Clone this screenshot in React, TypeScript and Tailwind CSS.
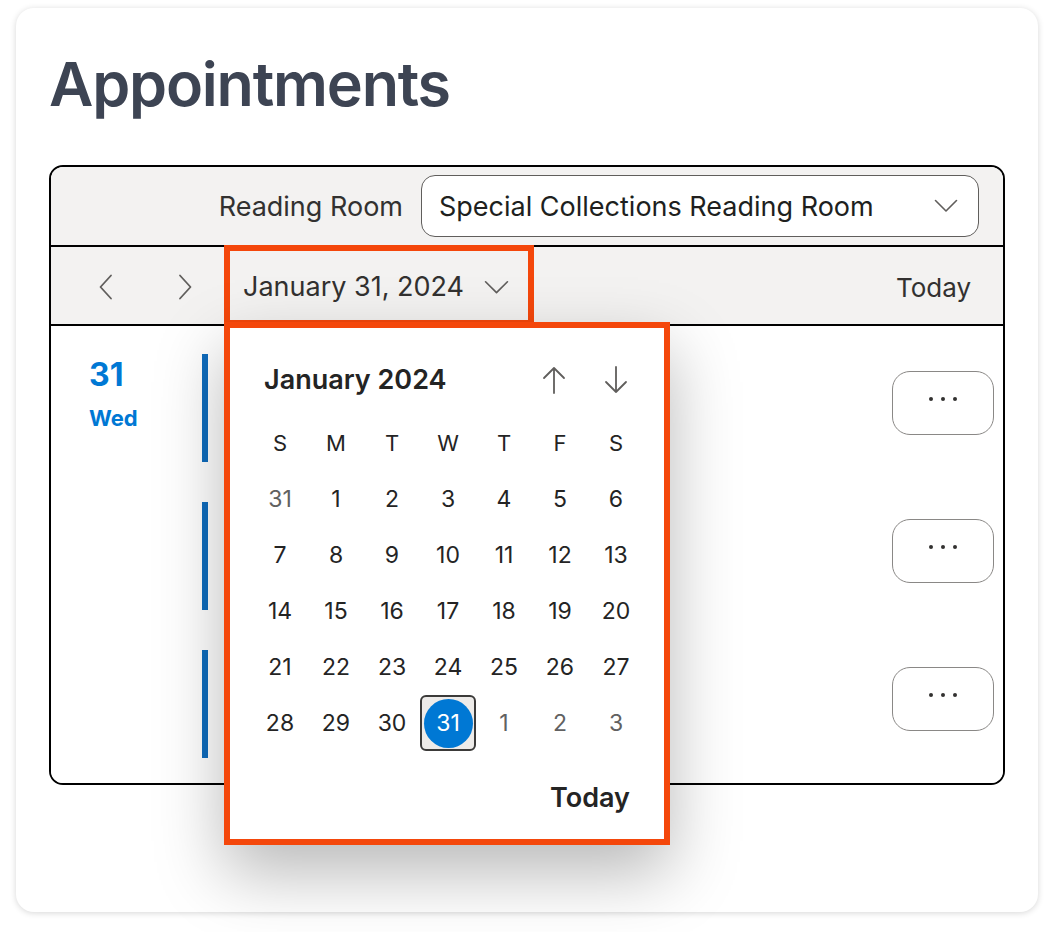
import React from "react";

const FONT = { fontFamily: "Inter, 'Noto Sans', 'Liberation Sans', sans-serif" };

function ChevronLeft() {
  return (
    <svg width="18" height="26" viewBox="0 0 18 26" fill="none">
      <path d="M14 1.5 L3.5 13 L14 24.5" stroke="#605e5c" strokeWidth="1.8" strokeLinecap="round" strokeLinejoin="round" />
    </svg>
  );
}
function ChevronRight() {
  return (
    <svg width="18" height="26" viewBox="0 0 18 26" fill="none">
      <path d="M4 1.5 L14.5 13 L4 24.5" stroke="#605e5c" strokeWidth="1.8" strokeLinecap="round" strokeLinejoin="round" />
    </svg>
  );
}
function ChevronDown({ w = 24, h = 14 }: { w?: number; h?: number }) {
  return (
    <svg width={w} height={h} viewBox="0 0 24 14" fill="none">
      <path d="M1.5 1.5 L12 12 L22.5 1.5" stroke="#605e5c" strokeWidth="1.6" strokeLinecap="round" strokeLinejoin="round" />
    </svg>
  );
}
function ArrowUp() {
  return (
    <svg width="24" height="28" viewBox="0 0 24 28" fill="none">
      <path d="M12 27 V2 M2 12 L12 2 L22 12" stroke="#605e5c" strokeWidth="1.8" strokeLinecap="round" strokeLinejoin="round" />
    </svg>
  );
}
function ArrowDown() {
  return (
    <svg width="24" height="28" viewBox="0 0 24 28" fill="none">
      <path d="M12 1 V26 M2 16 L12 26 L22 16" stroke="#605e5c" strokeWidth="1.8" strokeLinecap="round" strokeLinejoin="round" />
    </svg>
  );
}

function MoreButton() {
  return (
    <button className="w-[102px] h-[64px] rounded-[18px] border-[1.5px] border-[#8a8886] bg-white flex items-center justify-center gap-[8px] pb-[8px]">
      <span className="w-[4px] h-[4px] rounded-full bg-[#323130]" />
      <span className="w-[4px] h-[4px] rounded-full bg-[#323130]" />
      <span className="w-[4px] h-[4px] rounded-full bg-[#323130]" />
    </button>
  );
}

const weeks: { d: number; out?: boolean; sel?: boolean }[][] = [
  [{ d: 31, out: true }, { d: 1 }, { d: 2 }, { d: 3 }, { d: 4 }, { d: 5 }, { d: 6 }],
  [{ d: 7 }, { d: 8 }, { d: 9 }, { d: 10 }, { d: 11 }, { d: 12 }, { d: 13 }],
  [{ d: 14 }, { d: 15 }, { d: 16 }, { d: 17 }, { d: 18 }, { d: 19 }, { d: 20 }],
  [{ d: 21 }, { d: 22 }, { d: 23 }, { d: 24 }, { d: 25 }, { d: 26 }, { d: 27 }],
  [{ d: 28 }, { d: 29 }, { d: 30 }, { d: 31, sel: true }, { d: 1, out: true }, { d: 2, out: true }, { d: 3, out: true }],
];

function Popup() {
  return (
    <div className="absolute left-[173px] top-[155px] w-[446px] h-[523px] z-10 bg-white border-[6px] border-[#f4470b] shadow-[0_28px_64px_rgba(0,0,0,0.28)] pt-[24px] pl-[22px] pr-[20px]">
      <div className="h-[56px] flex items-center">
        <div className="pl-[12px] text-[27px] font-semibold text-[#242424] flex-1">January 2024</div>
        <div className="w-[56px] flex justify-center mr-[5px] ml-[2px]"><ArrowUp /></div>
        <div className="w-[56px] flex justify-center ml-[1px]"><ArrowDown /></div>
      </div>
      <div className="mt-[7px] grid grid-cols-7">
        {["S", "M", "T", "W", "T", "F", "S"].map((w, i) => (
          <div key={i} className="h-[56px] flex items-center justify-center text-[22px] text-[#242424]">{w}</div>
        ))}
        {weeks.flat().map((c, i) =>
          c.sel ? (
            <div key={i} className="h-[56px] rounded-[6px] border-2 border-[#3b3a39] bg-[#edebe9] flex items-center justify-center">
              <div className="w-[49px] h-[49px] rounded-full bg-[#0078d4] text-white text-[23px] flex items-center justify-center">{c.d}</div>
            </div>
          ) : (
            <div key={i} className={"h-[56px] flex items-center justify-center text-[23px] " + (c.out ? "text-[#616161]" : "text-[#242424]")}>{c.d}</div>
          )
        )}
      </div>
      <div className="mt-[33px] h-[28px] flex items-center justify-end pr-[14px] text-[27px] font-semibold text-[#242424]">Today</div>
    </div>
  );
}

export default function App() {
  return (
    <div className="w-[1048px] h-[932px] bg-white pt-[8px] px-[16px]" style={FONT}>
      <div className="w-[1022px] h-[904px] rounded-[18px] bg-white shadow-[0_1px_6px_rgba(0,0,0,0.16)] px-[33px] pt-[38px]">
        <h1 className="text-[61px] leading-[76px] font-semibold text-[#3d4453] tracking-[-1.2px]">Appointments</h1>
        <div className="mt-[43px] relative border-2 border-black rounded-[14px]">
          <div className="h-[80px] bg-[#f3f2f1] rounded-t-[12px] border-b-2 border-black flex items-center justify-end pr-[24px] gap-[18px]">
            <span className="text-[27px] text-[#323130] pt-[3px]">Reading Room</span>
            <div className="w-[558px] h-[62px] rounded-[14px] border-[1.5px] border-[#605e5c] bg-white flex items-center pl-[17px] pr-[20px]">
              <span className="flex-1 text-[27px] text-[#201f1e] pt-[3px]">Special Collections Reading Room</span>
              <ChevronDown />
            </div>
          </div>
          <div className="h-[79px] bg-[#f3f2f1] border-b-2 border-black flex items-stretch pl-[31px] pr-[32px]">
            <button className="w-[48px] flex items-center justify-center pt-[3px]"><ChevronLeft /></button>
            <button className="w-[48px] ml-[31px] flex items-center justify-center pt-[3px]"><ChevronRight /></button>
            <div className="ml-[15px] -mt-[2px] -mb-[2px] w-[310px] border-[6px] border-[#f4470b] flex items-center pl-[13px] pt-[3px] gap-[20px] relative z-10">
              <span className="text-[27px] text-[#323130]">January 31, 2024</span>
              <ChevronDown w={25} h={15} />
            </div>
            <div className="flex-1" />
            <span className="self-center pt-[3px] text-[26px] text-[#323130]">Today</span>
          </div>
          <div className="bg-white rounded-b-[12px] pt-[28px] pb-[25px] flex flex-col gap-[40px]">
            {[0, 1, 2].map((i) => (
              <div key={i} className="flex h-[108px]">
                <div className="w-[151px] pl-[38px] pt-[2px]">
                  {i === 0 && (
                    <>
                      <div className="text-[32px] leading-[38px] font-bold text-[#0078d4]">31</div>
                      <div className="mt-[11px] text-[22px] leading-[26px] font-bold text-[#0078d4]">Wed</div>
                    </>
                  )}
                </div>
                <div className="w-[6px] h-[108px] bg-[#0f6cbd]" />
                <div className="flex-1" />
                <div className="pt-[17px] pr-[9px]"><MoreButton /></div>
              </div>
            ))}
          </div>
          <Popup />
        </div>
      </div>
    </div>
  );
}
